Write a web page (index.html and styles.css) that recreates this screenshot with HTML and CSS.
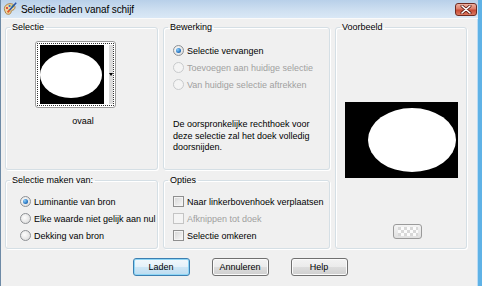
FILE: index.html
```html
<!DOCTYPE html>
<html lang="nl">
<head>
    <meta charset="UTF-8">
    <title>Selectie laden vanaf schijf</title>
    <link rel="stylesheet" href="styles.css">
</head>
<body>
    <div class="window">
        <div class="titlebar">
            <svg class="app-icon" width="14" height="14" viewBox="0 0 14 14">
                <path d="M1.5 8 C0.5 4 4.5 1 8.5 1.8 C12 2.6 13 5.5 11 7.5 C10 8.5 8 8 8 10 C8 12.5 4.5 13 2.8 11.2 Z" fill="#f0d6a0" stroke="#a0702c" stroke-width="0.8"/>
                <circle cx="4" cy="6" r="1.1" fill="#d8342c"/>
                <circle cx="6.6" cy="4" r="1.1" fill="#2f6fd0"/>
                <circle cx="9.6" cy="4.4" r="1.1" fill="#3aa640"/>
                <path d="M13.2 0.8 L6.2 8.6" stroke="#2654a8" stroke-width="1.5"/>
                <path d="M6.6 8.2 L4.6 10.4" stroke="#e0582a" stroke-width="2"/>
            </svg>
            <span class="title">Selectie laden vanaf schijf</span>
            <span class="close">
                <svg width="12" height="9" viewBox="0 0 12 9">
                    <path d="M2 1 L10 8 M10 1 L2 8" stroke="#5a1a14" stroke-width="3" stroke-linecap="round"/>
                    <path d="M2 1 L10 8 M10 1 L2 8" stroke="#fff" stroke-width="1.6" stroke-linecap="round"/>
                </svg>
            </span>
        </div>

        <div class="content">
            <div class="groups">
                <fieldset class="group g-selectie">
                    <legend>Selectie</legend>
                    <div class="thumb">
                        <div class="thumb-focus">
                            <div class="thumb-img"><div class="oval"></div></div>
                            <div class="thumb-scroll"><span class="arrow"></span></div>
                        </div>
                    </div>
                    <div class="thumb-name">ovaal</div>
                </fieldset>

                <fieldset class="group g-bewerking">
                    <legend>Bewerking</legend>
                    <div class="options">
                        <div class="option"><span class="radio checked"></span>Selectie vervangen</div>
                        <div class="option disabled"><span class="radio"></span>Toevoegen aan huidige selectie</div>
                        <div class="option disabled"><span class="radio"></span>Van huidige selectie aftrekken</div>
                    </div>
                    <p class="note">De oorspronkelijke rechthoek voor<br>deze selectie zal het doek volledig<br>doorsnijden.</p>
                </fieldset>

                <fieldset class="group g-voorbeeld">
                    <legend>Voorbeeld</legend>
                    <div class="preview"><div class="preview-oval"></div></div>
                    <div class="preview-btn"><span class="checker"></span></div>
                </fieldset>

                <fieldset class="group g-maken">
                    <legend>Selectie maken van:</legend>
                    <div class="options">
                        <div class="option"><span class="radio checked"></span>Luminantie van bron</div>
                        <div class="option"><span class="radio"></span>Elke waarde niet gelijk aan nul</div>
                        <div class="option"><span class="radio"></span>Dekking van bron</div>
                    </div>
                </fieldset>

                <fieldset class="group g-opties">
                    <legend>Opties</legend>
                    <div class="options">
                        <div class="option"><span class="check"></span>Naar linkerbovenhoek verplaatsen</div>
                        <div class="option disabled"><span class="check"></span>Afknippen tot doek</div>
                        <div class="option"><span class="check"></span>Selectie omkeren</div>
                    </div>
                </fieldset>
            </div>

            <div class="buttons">
                <button class="btn default">Laden</button>
                <button class="btn">Annuleren</button>
                <button class="btn">Help</button>
            </div>
        </div>
    </div>
</body>
</html>
```

FILE: styles.css
```css
body, html {
    margin: 0;
    padding: 0;
    width: 482px;
    height: 286px;
    overflow: hidden;
    font-family: 'Liberation Sans', Arial, sans-serif;
    font-size: 9px;
    font-variant-ligatures: none;
    color: #000;
    background-color: #f0f0f0;
}

.window {
    width: 482px;
    height: 286px;
    box-sizing: border-box;
    border-left: 1px solid #6d8aa6;
    border-right: 4px solid #5fb2e6;
    box-shadow: inset -1px 0 0 #bcdcf4;
    display: flex;
    flex-direction: column;
    background-color: #f0f0f0;
}

/* title bar */
.titlebar {
    height: 18px;
    flex: none;
    display: flex;
    align-items: center;
    background: linear-gradient(#b8d0e9, #cfe0f1 60%, #dae8f6);
    padding-left: 2px;
}

    .titlebar .app-icon {
        flex: none;
        margin-top: -1px;
    }

    .titlebar .title {
        margin-left: 4px;
        font-size: 10px;
        letter-spacing: -0.1px;
        color: #000;
    }

    .titlebar .close {
        margin-left: auto;
        margin-right: 1px;
        width: 22px;
        height: 13px;
        box-sizing: border-box;
        border: 1px solid #6e2c22;
        border-radius: 3px;
        background: linear-gradient(#eeb2a2, #dc7c68 45%, #c84a34 55%, #dc7a62);
        display: flex;
        align-items: center;
        justify-content: center;
    }

.content {
    flex: 1;
    border-top: 1px solid #fafafa;
    padding: 2px 0 0 4px;
}

.groups {
    display: grid;
    grid-template-columns: 153px 167px 132px;
    grid-template-rows: 149px 75px;
    column-gap: 5px;
    row-gap: 4px;
}

/* group boxes */
.group {
    margin: 0;
    padding: 0;
    min-width: 0;
    box-sizing: border-box;
    border: 1px solid #d5dfe5;
    border-radius: 3px;
    box-shadow: inset 1px 1px 0 #fff, 1px 1px 0 #fff;
}

    .group legend {
        margin-left: 4px;
        padding: 0 2px;
        line-height: 12px;
        font-size: 9px;
    }

.g-selectie { grid-column: 1; grid-row: 1; }
.g-bewerking { grid-column: 2; grid-row: 1; }
.g-voorbeeld { grid-column: 3; grid-row: 1 / 3; }
.g-maken { grid-column: 1; grid-row: 2; }
.g-opties { grid-column: 2; grid-row: 2; }

/* selection thumbnail */
.thumb {
    margin: 8px 0 0 29px;
    width: 81px;
    height: 67px;
    box-sizing: border-box;
    border: 1px solid #9c9c9c;
    border-radius: 3px;
    background-color: #fff;
    padding: 1px;
    display: flex;
}

.thumb-focus {
    flex: 1;
    display: flex;
    border: 1px dotted #333;
    padding: 1px 0 1px 2px;
}

.thumb-img {
    width: 64px;
    background-color: #000;
    display: flex;
    align-items: center;
}

.oval {
    width: 62px;
    height: 46px;
    border-radius: 50%;
    background-color: #fff;
}

.thumb-scroll {
    flex: 1;
    display: flex;
    flex-direction: column;
    align-items: flex-end;
    background: linear-gradient(90deg, #fff 0, #fff 60%, #dcdcdc 60%);
}

    .thumb-scroll .arrow {
        margin-top: 28px;
        width: 0;
        height: 0;
        border-left: 2px solid transparent;
        border-right: 2px solid transparent;
        border-top: 3px solid #000;
    }

.thumb-name {
    text-align: center;
    margin-top: 7px;
    line-height: 12px;
    padding-left: 3px;
}

/* option rows */
.options {
    padding: 9px 0 0 9px;
}

.g-maken .options {
    padding: 7px 0 0 14px;
}

.g-opties .options {
    padding: 7px 0 0 9px;
}

.option {
    height: 17px;
    display: flex;
    align-items: center;
    white-space: nowrap;
}

    .option.disabled {
        color: #a0a0a0;
    }

.radio {
    flex: none;
    width: 11px;
    height: 11px;
    box-sizing: border-box;
    margin-right: 3px;
    border-radius: 50%;
    border: 1px solid #8e9195;
    background: radial-gradient(circle at 40% 40%, #fdfdfd, #e2e2e2 70%, #d3d3d3);
    display: flex;
    align-items: center;
    justify-content: center;
}

    .radio.checked::after {
        content: '';
        width: 5px;
        height: 5px;
        border-radius: 50%;
        background: radial-gradient(circle at 35% 35%, #8fd0fb, #2a78c4 60%, #13457c);
    }

.disabled .radio {
    border-color: #c8cacc;
    background: #f4f4f4;
}

.check {
    flex: none;
    width: 11px;
    height: 11px;
    box-sizing: border-box;
    margin-right: 3px;
    border: 1px solid #8f8f8f;
    background: linear-gradient(135deg, #d6d6d6, #f8f8f8);
    box-shadow: inset 0 0 0 1px #f4f4f4;
}

.disabled .check {
    border-color: #c4c4c4;
    background: #f4f4f4;
}

.note {
    margin: 26px 0 0 9px;
    line-height: 11.5px;
}

/* preview */
.preview {
    margin: 69px auto 0;
    width: 113px;
    height: 76px;
    background-color: #000;
    display: flex;
    align-items: center;
    justify-content: flex-end;
    padding-right: 2px;
    box-sizing: border-box;
}

.preview-oval {
    width: 88px;
    height: 64px;
    border-radius: 50%;
    background-color: #fff;
}

.preview-btn {
    margin: 46px 0 0 57px;
    width: 29px;
    height: 15px;
    box-sizing: border-box;
    border: 1px solid #9a9a9a;
    border-radius: 3px;
    background: linear-gradient(#f4f4f4, #e0e0e0);
    display: flex;
    align-items: center;
    justify-content: center;
}

    .preview-btn .checker {
        width: 20px;
        height: 9px;
        background: repeating-conic-gradient(#fbfbfb 0 25%, #d8d8d8 0 50%) 0 0 / 6px 6px;
    }

/* buttons */
.buttons {
    display: flex;
    justify-content: center;
    gap: 22px;
    margin-top: 9px;
    padding-right: 3px;
}

.btn {
    width: 57px;
    height: 18px;
    padding: 0;
    font-family: 'Liberation Sans', Arial, sans-serif;
    font-size: 9px;
    font-variant-ligatures: none;
    color: #000;
    border: 1px solid #707070;
    border-radius: 3px;
    background: linear-gradient(#f3f3f3, #ebebeb 50%, #dddddd 51%, #cfcfcf);
    box-shadow: inset 0 0 0 1px #fbfbfb;
}

    .btn.default {
        border-color: #3c7fb1;
        background: linear-gradient(#f2f8fc, #e4f1fa 50%, #cde6f6 51%, #bddcf0);
        box-shadow: inset 0 0 0 1px #8ed6f6;
    }
```
